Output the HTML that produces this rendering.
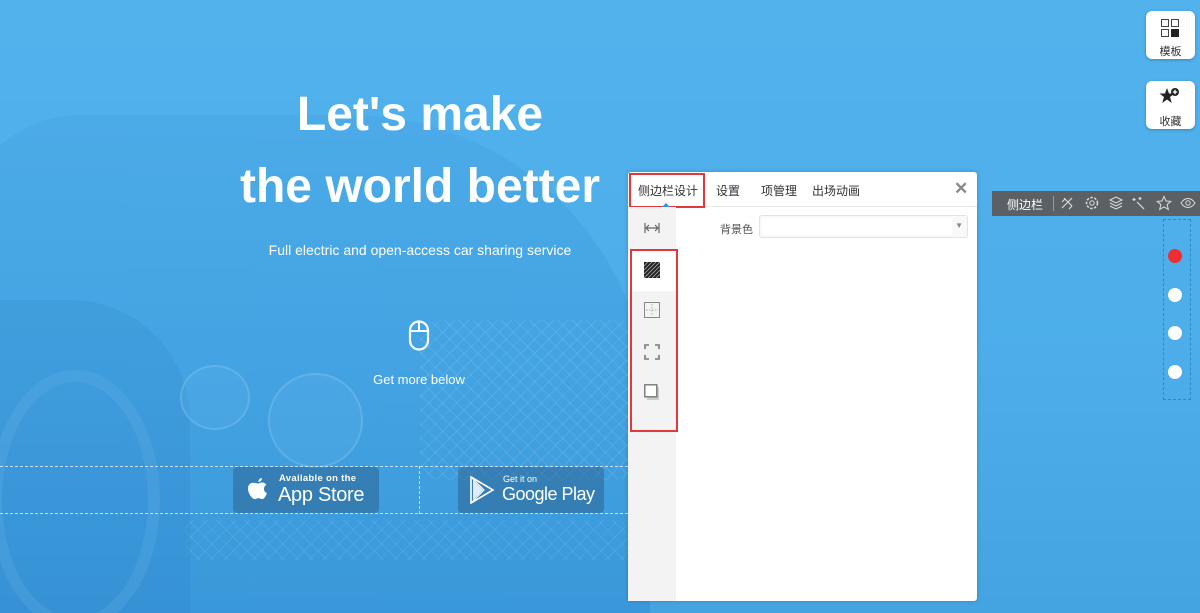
<!DOCTYPE html>
<html style="width:1200px;height:613px;overflow:hidden"><head><meta charset="utf-8">
<style>
*{margin:0;padding:0;box-sizing:border-box}
body{width:1200px;height:613px;overflow:hidden;position:relative;background:linear-gradient(180deg,#52b2ec 0%,#4cadea 60%,#44a4e2 100%);font-family:"Liberation Sans","Noto Sans CJK SC",sans-serif}
.abs{position:absolute}
.car{position:absolute;left:-40px;top:115px;width:690px;height:520px;border-radius:120px 300px 0 0;background:linear-gradient(180deg,rgba(40,130,200,.12),rgba(30,120,195,.28));}
.car2{position:absolute;left:0;top:300px;width:190px;height:313px;border-radius:0 120px 0 0;background:rgba(30,110,185,.12)}
.wheel{position:absolute;left:-10px;top:370px;width:170px;height:260px;border-radius:50%;border:12px solid rgba(120,190,240,.18)}
.grill{position:absolute;left:420px;top:320px;width:215px;height:160px;border-radius:20px;background:repeating-linear-gradient(45deg,rgba(255,255,255,.1) 0 1px,transparent 1px 10px),repeating-linear-gradient(-45deg,rgba(255,255,255,.1) 0 1px,transparent 1px 10px);}
.lamp{position:absolute;border-radius:50%;background:rgba(120,190,240,.15);border:2px solid rgba(160,210,245,.25)}
h1{position:absolute;left:190px;width:460px;text-align:center;color:#fff;font-weight:bold;font-size:48px;white-space:nowrap}
.btn{position:absolute;top:467px;height:46px;width:146px;background:rgba(40,80,120,.4);border-radius:4px;color:#fff;white-space:nowrap}
.panel{position:absolute;left:628px;top:172px;width:349px;height:429px;background:#fff;border-radius:3px;box-shadow:0 0 4px rgba(0,0,0,.2)}
.tabs{height:35px;border-bottom:1px solid #e8e8e8;font-size:12px;color:#333}
.tabs span{position:absolute;top:10px}
.side{position:absolute;left:0;top:35px;width:48px;height:394px;background:#f3f3f3}
.ic{position:absolute;left:16px}
.rbtn{position:absolute;left:1146px;width:49px;height:48px;background:#fff;border-radius:6px;box-shadow:0 1px 3px rgba(0,0,0,.25);font-size:11px;color:#333;text-align:center}
.tool{position:absolute;left:992px;top:191px;width:208px;height:25px;background:#5b6065;color:#fff;font-size:12px}
.dot{position:absolute;left:1168px;width:14px;height:14px;border-radius:50%;background:#fff}
</style></head><body>
<div class="car"></div><div class="car2"></div><div class="wheel"></div>
<div class="grill"></div>
<div class="lamp" style="left:180px;top:365px;width:70px;height:65px"></div>
<div class="lamp" style="left:268px;top:373px;width:95px;height:95px"></div>
<div class="abs" style="left:185px;top:520px;width:450px;height:40px;background:repeating-linear-gradient(45deg,rgba(255,255,255,.08) 0 1px,transparent 1px 10px),repeating-linear-gradient(-45deg,rgba(255,255,255,.08) 0 1px,transparent 1px 10px)"></div>

<h1 style="top:87px">Let's make</h1>
<h1 style="top:159px">the world better</h1>
<div class="abs" style="left:200px;width:440px;top:242px;text-align:center;color:#fff;font-size:14px">Full electric and open-access car sharing service</div>
<svg class="abs" style="left:408px;top:320px" width="22" height="32" viewBox="0 0 22 32"><rect x="2" y="1.5" width="18" height="28" rx="9" fill="none" stroke="#fff" stroke-width="2.2"/><line x1="11" y1="2" x2="11" y2="11" stroke="#fff" stroke-width="2"/><line x1="2" y1="11" x2="20" y2="11" stroke="#fff" stroke-width="2"/></svg>
<div class="abs" style="left:300px;width:238px;top:372px;text-align:center;color:#fff;font-size:13px">Get more below</div>

<div class="abs" style="left:0;top:466px;width:628px;height:48px;border-top:1px dashed rgba(255,255,255,.7);border-bottom:1px dashed rgba(255,255,255,.7)"></div>
<div class="abs" style="left:419px;top:466px;height:48px;border-left:1px dashed rgba(255,255,255,.7)"></div>
<div class="btn" style="left:233px">
<svg class="abs" style="left:13px;top:9px" width="24" height="28" viewBox="0 0 24 28"><path d="M16 2c0 2-1.6 4-3.6 4C12.2 4 14 2 16 2z M12 7.5c1.3 0 2.5-1 4-1 2 0 3.5 1 4.3 2.4-3.5 2-3 6.8.6 8.2-.8 2.4-2.8 6-4.6 6-1.4 0-1.8-.9-3.8-.9s-2.5.9-3.8.9C6.2 23 2 17.5 2 12.5 2 9 4.4 6.7 7 6.7c1.5 0 3.2.8 5 .8z" fill="#fff"/></svg>
<div class="abs" style="left:46px;top:6px;font-size:9.5px;font-weight:bold;letter-spacing:.3px">Available on the</div>
<div class="abs" style="left:45px;top:17px;font-size:20px;letter-spacing:-.3px">App Store</div></div>
<div class="btn" style="left:458px">
<svg class="abs" style="left:11px;top:9px" width="26" height="28" viewBox="0 0 26 28"><path d="M2 1 L24 14 L2 27 Z" fill="none" stroke="#fff" stroke-width="1.6"/><path d="M2 1 L15 14 L2 27" fill="none" stroke="#fff" stroke-width="1.2"/><path d="M4 4 L14 14 L4 24Z" fill="rgba(255,255,255,.85)"/></svg>
<div class="abs" style="left:45px;top:7px;font-size:9px">Get it on</div>
<div class="abs" style="left:44px;top:17px;font-size:18px;letter-spacing:-.5px">Google Play</div></div>

<div class="panel">
 <div class="tabs">
  <span style="left:10px">侧边栏设计</span><span style="left:88px">设置</span><span style="left:133px">项管理</span><span style="left:184px">出场动画</span>
  <span style="left:326px;top:7px;font-size:17px;color:#888;font-weight:bold">✕</span>
 </div>
 <div class="abs" style="left:1px;top:1px;width:76px;height:35px;border:2px solid #e0393d"></div>
 <div class="abs" style="left:33px;top:26px;width:0;height:0;border:5px solid transparent;border-bottom-color:#3d8fd6"></div>
 <div class="side">
  <div class="abs" style="left:0;top:44px;width:48px;height:40px;background:#fff"></div>
  <svg class="ic" style="top:15px" width="16" height="12" viewBox="0 0 16 12"><path d="M1 1v10M15 1v10M2 6h12M5 3L2 6l3 3M11 3l3 3-3 3" stroke="#666" fill="none" stroke-width="1.2"/></svg>
  <svg class="ic" style="top:55px" width="16" height="16"><rect width="16" height="16" fill="#222"/><path d="M0 4L4 0M0 8L8 0M0 12L12 0M0 16L16 0M4 16L16 4M8 16L16 8M12 16L16 12" stroke="#aaa" stroke-width=".8"/></svg>
  <svg class="ic" style="top:95px" width="16" height="16"><rect x=".5" y=".5" width="15" height="15" fill="none" stroke="#888"/><path d="M8 2v12M2 8h12" stroke="#aaa" stroke-dasharray="1.5 1.5"/></svg>
  <svg class="ic" style="top:137px" width="16" height="16"><path d="M1 5V1h4M11 1h4v4M15 11v4h-4M5 15H1v-4" stroke="#777" fill="none" stroke-width="1.6"/></svg>
  <svg class="ic" style="top:177px" width="16" height="17"><rect x="3" y="3" width="12" height="13" fill="#ccc"/><rect x=".8" y=".8" width="12" height="12" fill="#fff" stroke="#777" stroke-width="1.4"/></svg>
 </div>
 <div class="abs" style="left:2px;top:77px;width:48px;height:183px;border:2px solid #e0393d"></div>
 <div class="abs" style="left:92px;top:49px;font-size:11px;color:#555">背景色</div>
 <div class="abs" style="left:131px;top:43px;width:209px;height:23px;border:1px solid #e3e3e3;border-radius:3px;background:#f9f9f9"><span class="abs" style="right:4px;top:5px;font-size:8px;color:#888">▼</span><div class="abs" style="left:2px;top:2px;width:190px;height:17px;background:#fff"></div></div>
</div>

<div class="rbtn" style="top:11px">
 <svg class="abs" style="left:15px;top:8px" width="19" height="19"><rect x=".5" y=".5" width="7" height="7" fill="none" stroke="#444"/><rect x="10.5" y=".5" width="7" height="7" fill="none" stroke="#444"/><rect x=".5" y="10.5" width="7" height="7" fill="none" stroke="#444"/><rect x="10" y="10" width="8" height="8" fill="#222"/></svg>
 <div class="abs" style="left:0;width:49px;top:32px">模板</div></div>
<div class="rbtn" style="top:81px">
 <svg class="abs" style="left:13px;top:5px" width="22" height="20" viewBox="0 0 22 20"><path d="M8 2l2 5.5h5.5l-4.5 3.5 1.8 6-4.8-3.5-4.8 3.5 1.8-6L.5 7.5H6z" fill="#222"/><circle cx="16" cy="6" r="4" fill="#222"/><path d="M16 3.8v4.4M13.8 6h4.4" stroke="#fff" stroke-width="1.3"/></svg>
 <div class="abs" style="left:0;width:49px;top:32px">收藏</div></div>

<div class="tool">
 <span class="abs" style="left:15px;top:5px">侧边栏</span>
 <div class="abs" style="left:61px;top:5px;height:15px;border-left:1px solid #999"></div>
 <svg class="abs" style="left:68px;top:5px" width="14" height="14"><path d="M2 12L12 2M4 2l8 8M2 6l3-3M9 13l3-3" stroke="#ddd" fill="none" stroke-width="1.1"/></svg>
 <svg class="abs" style="left:93px;top:5px" width="14" height="14"><circle cx="7" cy="7" r="2.2" stroke="#ddd" fill="none"/><circle cx="7" cy="7" r="5.5" stroke="#ddd" fill="none" stroke-dasharray="2.5 1.5" stroke-width="1.5"/></svg>
 <svg class="abs" style="left:116px;top:4px" width="16" height="16"><path d="M8 2l6 3-6 3-6-3zM2 8l6 3 6-3M2 11l6 3 6-3" stroke="#ddd" fill="none"/></svg>
 <svg class="abs" style="left:140px;top:5px" width="14" height="14"><path d="M5 6l7 7M2 2v3M.5 3.5h3M8 1v3M6.5 2.5h3" stroke="#ddd" fill="none" stroke-width="1.2"/></svg>
 <svg class="abs" style="left:164px;top:4px" width="16" height="16"><path d="M8 1.5l2 4.5 4.8.4-3.7 3.2 1.2 4.8L8 11.8l-4.3 2.6 1.2-4.8L1.2 6.4 6 6z" stroke="#ddd" fill="none"/></svg>
 <svg class="abs" style="left:188px;top:5px" width="16" height="14"><path d="M1 7c4-6 10-6 14 0-4 6-10 6-14 0z" stroke="#ddd" fill="none"/><circle cx="8" cy="7" r="2.2" stroke="#ddd" fill="none"/></svg>
</div>
<div class="abs" style="left:1163px;top:219px;width:28px;height:181px;border:1px dashed #2f86cc"></div>
<div class="dot" style="top:249px;background:#ee2e33"></div>
<div class="dot" style="top:288px"></div>
<div class="dot" style="top:326px"></div>
<div class="dot" style="top:365px"></div>
</body></html>
